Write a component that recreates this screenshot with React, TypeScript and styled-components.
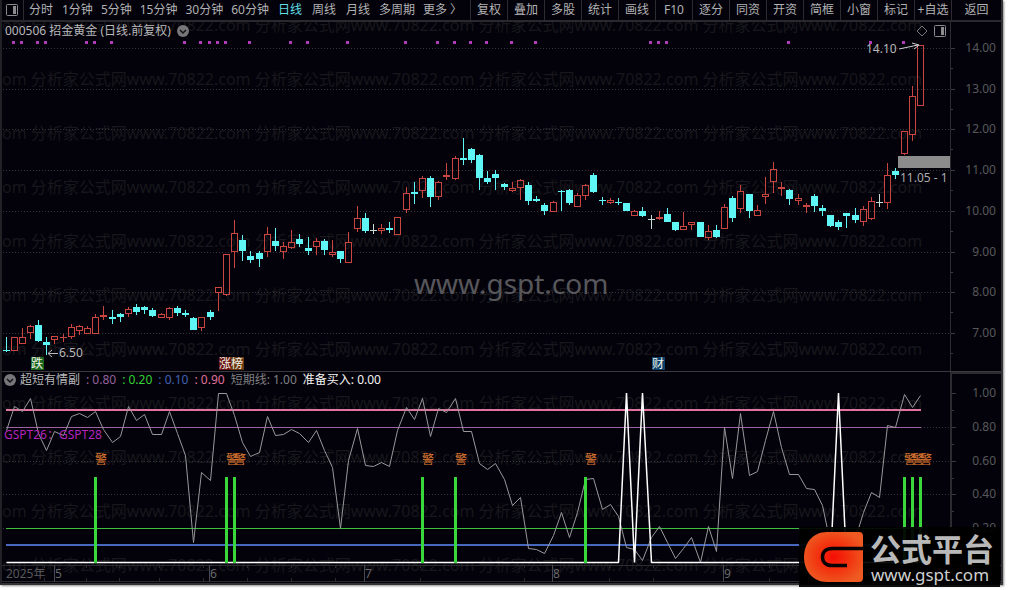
import React from "react";
import styled, { createGlobalStyle } from "styled-components";

const FONT = '"Noto Sans", "Noto Sans CJK SC", sans-serif';

const GlobalStyle = createGlobalStyle`
  *, *::before, *::after { box-sizing: border-box; }
  body {
    margin: 0;
    background: #fff;
    font-family: ${FONT};
    font-size: 12px;
    line-height: 16px;
  }
`;

const Page = styled.div`
  padding: 0 6px 5px 0;
`;

const Frame = styled.main`
  position: relative;
  background: #03020a;
  border: 2px solid #333336;
  border-top: 0;
  border-left-color: #222226;
  box-shadow: 1px 1px 2px #8c8c8c;
`;

const Toolbar = styled.nav`
  display: flex;
  height: 22px;
  border-bottom: 2px solid #29292d;
`;

const PanelToggle = styled.button`
  display: flex;
  align-items: center;
  justify-content: center;
  width: 22px;
  padding: 0 2px 0 0;
  border: 0;
  border-right: 1px solid #2c2c30;
  background: none;
`;

const Periods = styled.div`
  display: flex;
  flex: 1;
`;

const PeriodButton = styled.button<{ $active?: boolean }>`
  min-width: 34px;
  padding: 0 4px;
  border: 0;
  background: none;
  font: inherit;
  white-space: nowrap;
  color: ${(p) => (p.$active ? "#62dfe4" : "#b2b2b4")};
`;

const ToolButton = styled.button<{ $wide?: boolean }>`
  width: ${(p) => (p.$wide ? "50px" : "37px")};
  padding: 0;
  border: 0;
  border-left: 1px solid #2c2c30;
  background: none;
  font: inherit;
  white-space: nowrap;
  color: #b2b2b4;
`;

const Body = styled.div`
  position: relative;
  overflow: hidden;
`;

const Watermark = styled.div`
  position: absolute;
  top: -24px;
  left: 0;
  font-size: 16px;
  line-height: 54px;
  white-space: pre;
  color: #17171c;
  pointer-events: none;
`;

const Panel = styled.section<{ $ruled?: boolean }>`
  position: relative;
  border-top: ${(p) => (p.$ruled ? "1px solid #3a3a3e" : "0")};
`;

const PanelHeader = styled.header<{ $height: number }>`
  display: grid;
  grid-template-columns: 1fr 51px;
  height: ${(p) => p.$height}px;
`;

const HeaderMain = styled.div`
  display: flex;
  align-items: center;
  gap: 6px;
  padding: 0 4px 0 2px;
`;

const AxisCap = styled.div<{ $boxed?: boolean }>`
  border-left: ${(p) => (p.$boxed ? "2px" : "1px")} solid #2c2c30;
  border-top: ${(p) => (p.$boxed ? "2px solid #2c2c30" : "0")};
`;

const StockName = styled.h1`
  margin: 0;
  padding-left: 1px;
  font-size: 12px;
  font-weight: 400;
  color: #b8b8ba;
`;

const IndicatorName = styled.h2`
  margin: 0 0 0 -2px;
  font-size: 12px;
  font-weight: 400;
  color: #b8b8ba;
`;

const Reading = styled.span<{ $color: string }>`
  color: ${(p) => p.$color};
  white-space: nowrap;
`;

const IconButton = styled.button<{ $push?: boolean }>`
  display: flex;
  padding: 0;
  border: 0;
  background: none;
  margin-left: ${(p) => (p.$push ? "auto" : "0")};
`;

const Chart = styled.svg`
  display: block;
  width: 100%;
  height: auto;
  font-family: ${FONT};
  font-size: 12px;
`;

const Brand = styled.aside`
  position: absolute;
  right: 1px;
  bottom: -4px;
  display: flex;
  align-items: center;
  gap: 7px;
  width: 201px;
  height: 60px;
  padding-left: 5px;
  background: rgba(0, 0, 0, 0.93);
`;

const BrandText = styled.div`
  display: flex;
  flex-direction: column;
`;

const BrandName = styled.strong`
  font-size: 31px;
  line-height: 36px;
  font-weight: 700;
  color: #b9b9ba;
`;

const BrandSite = styled.span`
  font-size: 17px;
  line-height: 16px;
  padding-left: 1px;
  color: #cfcfd0;
`;

type Kind = "u" | "d" | "n";
/* kind, body top, body bottom, high, low */
type Candle = [Kind, number, number, number, number];

const candles: Candle[] = [
  ["d", 350, 350, 337, 351], ["u", 337, 350, 337, 350], ["u", 337, 343, 328, 343], ["u", 326, 332, 325, 338],
  ["d", 325, 340, 320, 341], ["d", 342, 344, 337, 354], ["u", 336, 339, 336, 343], ["u", 337, 337, 334, 341],
  ["u", 327, 336, 324, 338], ["u", 326, 330, 325, 334], ["u", 328, 333, 326, 333], ["u", 317, 333, 314, 333],
  ["u", 315, 316, 306, 319], ["d", 317, 318, 310, 323], ["d", 314, 316, 313, 321], ["u", 309, 313, 307, 316],
  ["d", 307, 311, 304, 314], ["d", 307, 309, 306, 313], ["d", 310, 315, 308, 316], ["u", 314, 317, 313, 317],
  ["u", 308, 317, 307, 319], ["d", 308, 312, 306, 315], ["d", 313, 314, 310, 316], ["d", 318, 329, 317, 329],
  ["u", 317, 327, 317, 330], ["d", 312, 316, 310, 319], ["u", 287, 292, 287, 310], ["u", 254, 294, 254, 295],
  ["u", 233, 251, 220, 267], ["d", 240, 250, 235, 260], ["d", 256, 259, 251, 262], ["d", 253, 258, 251, 266],
  ["u", 234, 251, 227, 256], ["d", 241, 245, 228, 250], ["u", 246, 251, 242, 258], ["u", 242, 247, 230, 248],
  ["d", 239, 243, 234, 246], ["d", 248, 250, 237, 254], ["u", 241, 246, 238, 254], ["d", 241, 249, 239, 254],
  ["u", 252, 254, 240, 256], ["d", 251, 258, 251, 262], ["u", 242, 262, 232, 262], ["u", 218, 228, 206, 231],
  ["d", 218, 230, 213, 232], ["n", 230, 230, 224, 233], ["u", 228, 230, 224, 233], ["d", 228, 229, 222, 232],
  ["u", 217, 234, 217, 234], ["u", 193, 209, 187, 212], ["d", 192, 193, 182, 203], ["u", 178, 190, 176, 197],
  ["d", 178, 196, 176, 206], ["u", 182, 196, 181, 199], ["u", 175, 176, 163, 179], ["u", 158, 178, 156, 179],
  ["d", 158, 159, 138, 164], ["d", 149, 159, 148, 162], ["d", 155, 177, 154, 189], ["d", 178, 181, 171, 183],
  ["d", 174, 177, 170, 189], ["d", 184, 186, 183, 189], ["u", 188, 190, 182, 191], ["u", 180, 187, 179, 199],
  ["d", 185, 200, 182, 204], ["d", 199, 200, 196, 201], ["d", 205, 210, 203, 214], ["u", 202, 211, 201, 211],
  ["d", 191, 191, 190, 210], ["d", 190, 202, 189, 204], ["u", 195, 206, 193, 206], ["u", 185, 195, 184, 199],
  ["d", 175, 191, 173, 192], ["d", 200, 200, 197, 204], ["u", 200, 202, 198, 203], ["d", 202, 202, 198, 204],
  ["d", 203, 210, 203, 210], ["u", 211, 215, 210, 215], ["d", 211, 215, 207, 216], ["n", 219, 219, 215, 228],
  ["u", 217, 218, 211, 219], ["d", 214, 221, 208, 221], ["d", 222, 229, 222, 230], ["u", 226, 229, 212, 229],
  ["u", 222, 224, 222, 229], ["d", 222, 236, 222, 236], ["u", 231, 237, 225, 239], ["d", 230, 236, 225, 237],
  ["u", 207, 228, 204, 228], ["d", 198, 217, 196, 221], ["u", 191, 208, 185, 212], ["d", 194, 210, 194, 217],
  ["u", 210, 215, 205, 215], ["u", 194, 196, 177, 203], ["u", 169, 181, 162, 192], ["u", 187, 188, 182, 195],
  ["d", 190, 198, 189, 204], ["u", 198, 200, 194, 204], ["u", 205, 206, 203, 212], ["d", 196, 205, 194, 211],
  ["d", 208, 210, 205, 215], ["d", 215, 225, 215, 226], ["d", 222, 226, 220, 229], ["d", 213, 215, 213, 227],
  ["d", 215, 219, 208, 222], ["u", 209, 221, 206, 225], ["u", 201, 218, 197, 219], ["n", 202, 202, 194, 206],
  ["u", 175, 202, 163, 208], ["d", 171, 174, 168, 178], ["u", 131, 153, 131, 154], ["u", 96, 134, 86, 140],
  ["u", 45, 105, 45, 105],
];

const shortLine = [
  430, 406, 411, 398, 433, 450, 431, 435, 416, 413, 417, 411, 429, 442, 436, 406, 420, 414, 434, 434,
  411, 433, 455, 542, 472, 480, 393, 393, 415, 442, 456, 452, 416, 435, 434, 429, 433, 442, 430, 450,
  467, 528, 460, 428, 465, 466, 462, 466, 430, 407, 419, 398, 436, 408, 412, 398, 431, 431, 463, 469,
  463, 479, 505, 497, 548, 549, 553, 535, 512, 537, 512, 479, 478, 509, 504, 516, 547, 549, 560, 537,
  526, 542, 558, 548, 537, 562, 526, 551, 427, 478, 413, 475, 471, 440, 411, 447, 474, 474, 488, 489,
  505, 543, 556, 545, 538, 512, 492, 497, 425, 427, 394, 407, 395,
];

const eventDots = [
  1, 2, 4, 5, 10, 11, 13, 22, 24, 25, 26, 27, 30, 35, 37, 42, 49, 53, 55, 57, 59, 62, 65, 79, 80, 81, 96, 106, 110,
];
const alerts = [11, 27, 28, 51, 55, 71, 110, 111, 112];
const buySpikes = [76, 78, 102];

const barX = (i: number) => Math.floor(6 + 8.165 * i);

const priceTicks = [14, 13, 12, 11, 10, 9, 8, 7].map((value, i) => ({
  label: value.toFixed(2),
  y: Math.round(48 + i * 40.7),
}));
const indicatorTicks = [1, 0.8, 0.6, 0.4, 0.2].map((value, i) => ({
  label: value.toFixed(2),
  y: Math.round(393 + i * 33.8),
}));

const badges = [
  { x: 31, text: "跌", fill: "#1b661f" },
  { x: 219, text: "涨", fill: "#6a1512" },
  { x: 231, text: "榜", fill: "#6b3a12" },
  { x: 652, text: "财", fill: "#0d3f6b" },
];

const months = [
  { x: 54, label: "5" },
  { x: 209, label: "6" },
  { x: 364, label: "7" },
  { x: 552, label: "8" },
  { x: 723, label: "9" },
];
const weekTicks = [44, 86, 119, 159, 203, 247, 291, 335, 420, 524, 609, 653, 769];

const RED = "#c9453f";
const CYAN = "#5ff6f6";
const NEUTRAL = "#c4dcd4";
const GRID = "#34343a";

function CandleMark({ index, data }: { index: number; data: Candle }) {
  const [kind, top, bottom, high, low] = data;
  const x = barX(index);
  const color = kind === "u" ? RED : kind === "d" ? CYAN : NEUTRAL;
  const hollow = kind === "u" && bottom - top > 1;
  if (hollow) {
    return (
      <g>
        {high < top && <rect x={x} y={high} width={1} height={top - high} fill={color} />}
        {low > bottom && <rect x={x} y={bottom} width={1} height={low - bottom + 1} fill={color} />}
        <rect x={x - 2.5} y={top + 0.5} width={6} height={bottom - top} fill="none" stroke={color} />
      </g>
    );
  }
  return (
    <g fill={color}>
      <rect x={x} y={high} width={1} height={low - high + 1} />
      <rect x={x - 3} y={top} width={7} height={bottom - top + 1} />
    </g>
  );
}

function ChevronBadge() {
  return (
    <svg width="12" height="12" viewBox="0 0 12 12" aria-hidden="true">
      <circle cx="6" cy="6" r="6" fill="#77777a" />
      <path d="M3 5l3 3 3-3" fill="none" stroke="#121218" strokeWidth="1.5" />
    </svg>
  );
}

function PanelIcon() {
  return (
    <svg width="12" height="12" viewBox="0 0 12 12" aria-hidden="true">
      <rect x="0.5" y="0.5" width="11" height="11" rx="1" fill="none" stroke="#8c8c8f" />
      <rect x="7" y="2" width="3" height="8" fill="#8c8c8f" />
    </svg>
  );
}

function PriceChart() {
  return (
    <Chart viewBox="2 40 999 331" role="img" aria-label="日线">
      {priceTicks.map((t) => (
        <g key={t.label}>
          <path d={`M3 ${t.y + 0.5}H950`} stroke={GRID} strokeDasharray="1 2" />
          <path d={`M950 ${t.y + 0.5}h5M950 ${t.y + 20.5}h3`} stroke="#3a3a3e" />
          <text x={996} y={t.y + 4} textAnchor="end" fill="#58585b">{t.label}</text>
        </g>
      ))}
      <path d="M950.5 40V371" stroke="#2c2c30" />
      {eventDots.map((i) => (
        <rect key={i} x={barX(i) - 2} y={41} width={3} height={3} fill="#b03cbc" />
      ))}
      <g shapeRendering="crispEdges">
        {candles.map((c, i) => <CandleMark key={i} index={i} data={c} />)}
      </g>
      <text x={414} y={294} fontSize={28} fill="#57575b">www.gspt.com</text>
      <text x={866} y={53} fill="#b8b8ba">14.10</text>
      <path d="M899 49L918 45M912 43l7 2-5 4" fill="none" stroke="#d0d0d2" />
      <rect x={898} y={156} width={52} height={12} fill="#8c8c8d" />
      <text x={900} y={182} fill="#aaaaac">11.05 - 1</text>
      <path d="M58 353.5H48M52 350l-4 3.500 4 3.500" fill="none" stroke="#b8b8ba" />
      <text x={59} y={357} fill="#b8b8ba">6.50</text>
      {badges.map((b) => (
        <g key={b.text}>
          <rect x={b.x} y={357} width={13} height={13} fill={b.fill} />
          <text x={b.x} y={368} fill="#f2f2e8">{b.text}</text>
        </g>
      ))}
    </Chart>
  );
}

function IndicatorChart() {
  const line = shortLine.map((y, i) => `${barX(i) + 0.5},${y + 0.5}`).join(" ");
  const buy = shortLine.map((_, i) => `${barX(i) + 0.5},${buySpikes.includes(i) ? 393 : 562.5}`).join(" ");
  return (
    <Chart viewBox="2 388 999 195" role="img" aria-label="超短有情副">
      {indicatorTicks.map((t) => (
        <g key={t.label}>
          <path d={`M3 ${t.y + 0.5}H950`} stroke={GRID} strokeDasharray="1 2" opacity={t.label === "1.00" ? 0 : 1} />
          <path d={`M952 ${t.y + 0.5}h4M952 ${t.y + 17.5}h2`} stroke="#3a3a3e" />
          <text x={996} y={t.y + 4} textAnchor="end" fill="#58585b">{t.label}</text>
        </g>
      ))}
      <path d="M951 388V565" stroke="#2c2c30" strokeWidth={2} />
      <path d="M2 565.5H1001M2 581.5H1001" stroke="#2c2c30" />
      <path d={weekTicks.map((x) => `M${x}.5 565v3M${x}.5 578v3`).join("")} stroke="#2c2c30" />
      <text x={6} y={578} fill="#58585b">2025年</text>
      {months.map((m) => (
        <g key={m.label}>
          <path d={`M${m.x}.5 565V582`} stroke="#48484c" />
          <text x={m.x + 1} y={578} fill="#68686b">{m.label}</text>
        </g>
      ))}
      <path d="M6 410H921" stroke="#e0769f" strokeWidth={2} />
      <path d="M6 427.5H921" stroke="#9c62a4" />
      <path d="M6 528.5H921" stroke="#3cc03c" />
      <path d="M6 545H921" stroke="#4668bd" strokeWidth={2} />
      <polyline points={line} fill="none" stroke="#98989b" />
      <text x={4} y={439} fill="#b224ba">GSPT26：GSPT28</text>
      <polyline points={buy} fill="none" stroke="#fff" strokeWidth={1.5} strokeMiterlimit={1} />
      {alerts.map((i) => (
        <g key={i}>
          <rect x={barX(i) - 1} y={477} width={3} height={86} fill="#3ad83a" />
          <text x={barX(i)} y={464} fill="#e07a30">警</text>
        </g>
      ))}
    </Chart>
  );
}

function BrandMark() {
  return (
    <svg width="59" height="50" viewBox="0 0 59 50" aria-hidden="true">
      <defs>
        <radialGradient id="brand-glow" cx="0.5" cy="0.5" r="0.55">
          <stop offset="0" stopColor="#f50d05" />
          <stop offset="0.5" stopColor="#f2330f" />
          <stop offset="1" stopColor="#ee5a22" />
        </radialGradient>
      </defs>
      <path d="M23 0H55Q59 0 59 4V46Q59 50 55 50H23C9 50 0 39 0 25S9 0 23 0Z" fill="url(#brand-glow)" />
      <path d="M59 16.500H28C22 16.500 18.500 20 18.500 25S22 33.500 28 33.500H43" fill="none" stroke="#080304" strokeWidth="3.500" />
    </svg>
  );
}

const periods = ["分时", "1分钟", "5分钟", "15分钟", "30分钟", "60分钟", "日线", "周线", "月线", "多周期", "更多 〉"];
const tools = ["复权", "叠加", "多股", "统计", "画线", "F10", "逐分", "同资", "开资", "简框", "小窗", "标记", "+自选"];
const readings = [
  { text: ": 0.80", color: "#93619b" },
  { text: ": 0.20", color: "#35d035" },
  { text: ": 0.10", color: "#4263b5" },
  { text: ": 0.90", color: "#e0709a" },
  { text: "短期线: 1.00", color: "#808083" },
  { text: "准备买入: 0.00", color: "#f4f4f4" },
];
const watermarkRow = "om " + "分析家公式网www.70822.com ".repeat(4);

export default function App() {
  return (
    <>
      <GlobalStyle />
      <Page>
        <Frame>
          <Toolbar>
            <PanelToggle aria-label="侧栏"><PanelIcon /></PanelToggle>
            <Periods>
              {periods.map((p) => (
                <PeriodButton key={p} $active={p === "日线"}>{p}</PeriodButton>
              ))}
            </Periods>
            {tools.map((t) => <ToolButton key={t}>{t}</ToolButton>)}
            <ToolButton $wide>返回</ToolButton>
          </Toolbar>
          <Body>
            <Watermark aria-hidden="true">
              {Array.from({ length: 11 }, (_, i) => <div key={i}>{watermarkRow}</div>)}
            </Watermark>
            <Panel>
              <PanelHeader $height={18}>
                <HeaderMain>
                  <StockName>000506 招金黄金 (日线.前复权)</StockName>
                  <IconButton aria-label="股票菜单"><ChevronBadge /></IconButton>
                  <IconButton $push aria-label="标记点">
                    <svg width="12" height="12" viewBox="0 0 12 12" aria-hidden="true">
                      <path d="M6 1l5 5-5 5-5-5z" fill="none" stroke="#77777a" />
                    </svg>
                  </IconButton>
                  <IconButton aria-label="侧栏"><PanelIcon /></IconButton>
                </HeaderMain>
                <AxisCap />
              </PanelHeader>
              <PriceChart />
            </Panel>
            <Panel $ruled>
              <PanelHeader $height={16}>
                <HeaderMain>
                  <IconButton aria-label="指标菜单"><ChevronBadge /></IconButton>
                  <IndicatorName>超短有情副</IndicatorName>
                  {readings.map((r) => <Reading key={r.text} $color={r.color}>{r.text}</Reading>)}
                </HeaderMain>
                <AxisCap $boxed />
              </PanelHeader>
              <IndicatorChart />
            </Panel>
          </Body>
          <Brand>
            <BrandMark />
            <BrandText>
              <BrandName>公式平台</BrandName>
              <BrandSite>www.gspt.com</BrandSite>
            </BrandText>
          </Brand>
        </Frame>
      </Page>
    </>
  );
}
